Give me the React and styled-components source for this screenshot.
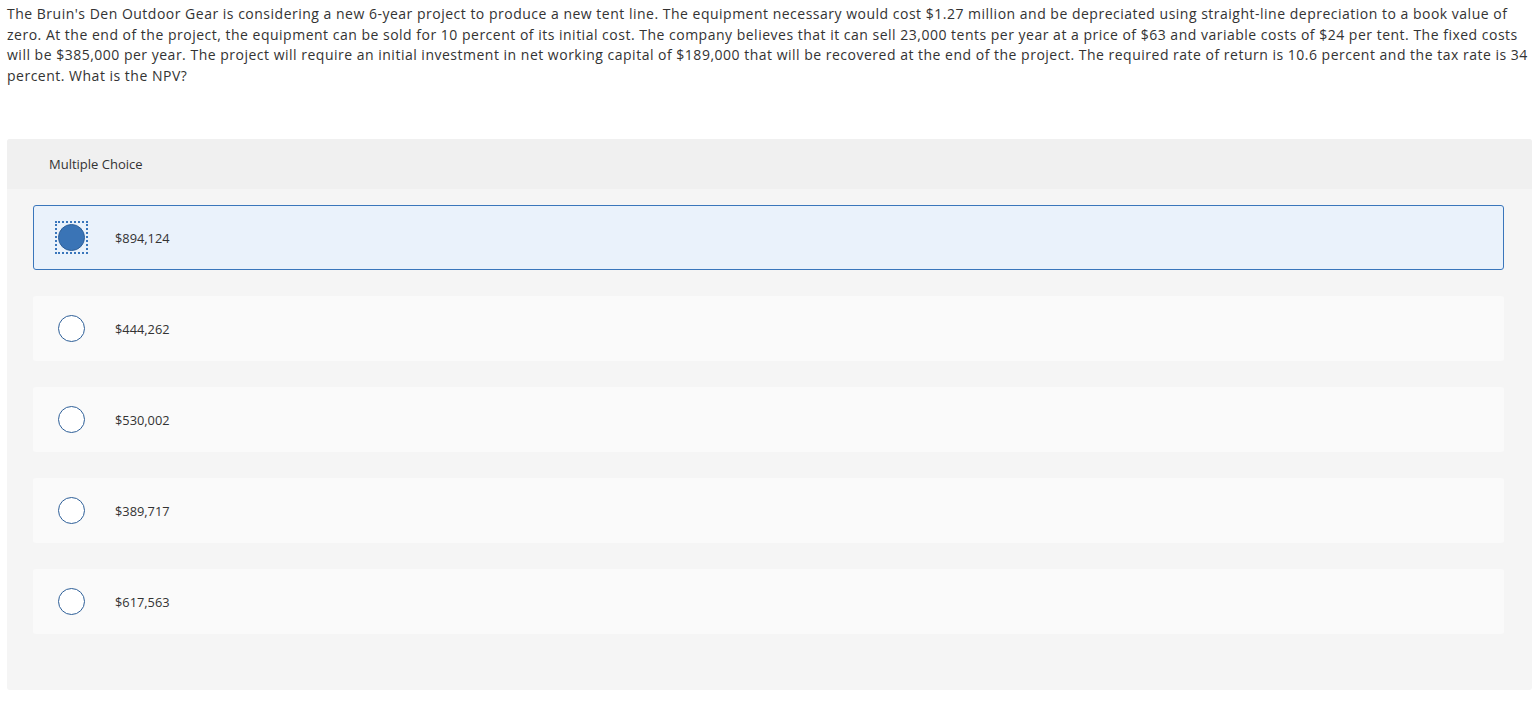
import styled, { createGlobalStyle } from 'styled-components'

const GlobalStyle = createGlobalStyle`
  body {
    margin: 0;
    background: #fff;
    font-family: 'Open Sans', 'Liberation Sans', sans-serif;
    color: #333;
  }
`

const options = ['$894,124', '$444,262', '$530,002', '$389,717', '$617,563']

const App = function () {
  const selected = 0

  return (
    <Page>
      <GlobalStyle />
      <Question>
        The Bruin's Den Outdoor Gear is considering a new 6-year project to
        produce a new tent line. The equipment necessary would cost $1.27
        million and be depreciated using straight-line depreciation to a book
        value of zero. At the end of the project, the equipment can be sold for
        10 percent of its initial cost. The company believes that it can sell
        23,000 tents per year at a price of $63 and variable costs of $24 per
        tent. The fixed costs will be $385,000 per year. The project will
        require an initial investment in net working capital of $189,000 that
        will be recovered at the end of the project. The required rate of
        return is 10.6 percent and the tax rate is 34 percent. What is the NPV?
      </Question>
      <Panel>
        <PanelHeader>Multiple Choice</PanelHeader>
        <OptionList>
          {options.map((option, i) => (
            <Option key={option} $selected={i === selected}>
              <RadioFocus $selected={i === selected}>
                <Radio $selected={i === selected} />
              </RadioFocus>
              <OptionLabel>{option}</OptionLabel>
            </Option>
          ))}
        </OptionList>
      </Panel>
    </Page>
  )
}

export default App

const Page = styled.div`
  padding: 4px 5px 20px 7px;
`

const Question = styled.p`
  margin: 0 0 53px;
  font-size: 14px;
  letter-spacing: 0.5px;
  line-height: 20.5px;
  color: #333;
`

const Panel = styled.div`
  background: #f5f5f5;
  border-radius: 3px;
  overflow: hidden;
`

const PanelHeader = styled.div`
  height: 50px;
  display: flex;
  align-items: center;
  padding-left: 42px;
  background: #f0f0f0;
  font-size: 13px;
  color: #333;
`

const OptionList = styled.div`
  display: flex;
  flex-direction: column;
  gap: 26px;
  padding: 16px 28px 56px 26px;
`

const Option = styled.div`
  height: 65px;
  box-sizing: border-box;
  display: flex;
  align-items: center;
  padding-left: ${(p) => (p.$selected ? '22px' : '23px')};
  border-radius: 3px;
  background: ${(p) => (p.$selected ? '#eaf2fb' : '#fafafa')};
  border: ${(p) => (p.$selected ? '1px solid #3a76bb' : 'none')};
`

const RadioFocus = styled.div`
  width: 31px;
  height: 31px;
  box-sizing: border-box;
  display: flex;
  align-items: center;
  justify-content: center;
  outline: ${(p) => (p.$selected ? '2px dotted #3a76bb' : 'none')};
  outline-offset: -1px;
`

const Radio = styled.div`
  width: 27px;
  height: 27px;
  box-sizing: border-box;
  border-radius: 50%;
  border: 1px solid #2e5f98;
  background: ${(p) => (p.$selected ? '#3a74b6' : '#fff')};
`

const OptionLabel = styled.span`
  margin-left: 28px;
  font-size: 12.8px;
  color: #333;
`
